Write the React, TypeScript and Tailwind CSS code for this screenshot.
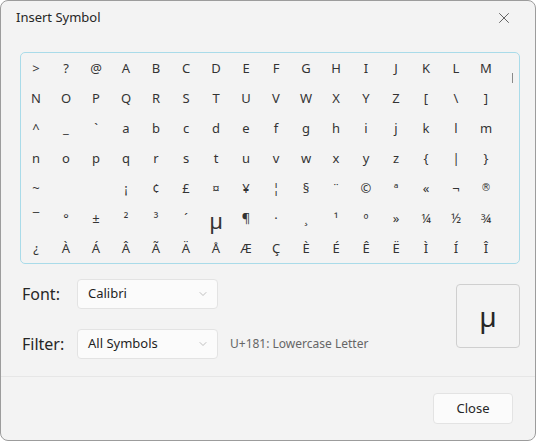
import { X, ChevronDown } from "lucide-react";

const rows: string[][] = [
    [">", "?", "@", "A", "B", "C", "D", "E", "F", "G", "H", "I", "J", "K", "L", "M"],
    ["N", "O", "P", "Q", "R", "S", "T", "U", "V", "W", "X", "Y", "Z", "[", "\\", "]"],
    ["^", "_", "`", "a", "b", "c", "d", "e", "f", "g", "h", "i", "j", "k", "l", "m"],
    ["n", "o", "p", "q", "r", "s", "t", "u", "v", "w", "x", "y", "z", "{", "|", "}"],
    ["~", "", "", "¡", "¢", "£", "¤", "¥", "¦", "§", "¨", "©", "ª", "«", "¬", "®"],
    ["¯", "°", "±", "²", "³", "´", "µ", "¶", "·", "¸", "¹", "º", "»", "¼", "½", "¾"],
    ["¿", "À", "Á", "Â", "Ã", "Ä", "Å", "Æ", "Ç", "È", "É", "Ê", "Ë", "Ì", "Í", "Î"],
];

function Select({ value }: { value: string }) {
    return (
        <div className="w-[141px] h-[30px] bg-[#fbfbfb] border border-[#e3e3e3] rounded-[4px] flex items-center justify-between pl-[10px] pr-[8px] text-[13px] text-[#1f1f1f]">
            <span>{value}</span>
            <ChevronDown size={12} strokeWidth={1.25} className="text-[#9a9a9a]" />
        </div>
    );
}

export default function App() {
    return (
        <div className="w-[536px] h-[441px] bg-[#f3f3f3] border border-[#9c9c9c] rounded-lg overflow-hidden flex flex-col font-['Noto_Sans',sans-serif] text-[#1f1f1f]">
            {/* title bar */}
            <div className="h-[34px] flex items-center justify-between pl-[15px] pr-[26px] shrink-0">
                <span className="text-[13px] text-[#262626]">Insert Symbol</span>
                <X size={18} strokeWidth={1} className="text-[#333] -mr-[4px]" />
            </div>

            <div className="flex-1 flex flex-col pl-[19px] pt-[17px] border-b border-[#e6e6e6]">
                {/* symbol grid */}
                <div className="relative w-[500px] h-[212px] border border-[#a9dbe9] rounded-[5px] pt-[1px]">
                    <div className="grid grid-cols-[repeat(16,30px)] grid-rows-[repeat(7,30px)]">
                        {rows.flat().map((ch, i) => (
                            <div
                                key={i}
                                className={`flex items-center justify-center text-[#333] ${ch === "µ" ? "text-[22px] pt-[2px]" : ch === "®" ? "text-[10px] font-['DejaVu_Sans',sans-serif] pb-[4px]" : "text-[13px]"}`}
                            >
                                {ch === "®" ? "\u00AE\uFE0E" : ch}
                            </div>
                        ))}
                    </div>
                    <div className="absolute right-[6px] top-[20px] w-[1px] h-[10px] bg-[#8a8a8a]" />
                </div>

                {/* font / filter */}
                <div className="flex mt-[15px]">
                    <div className="flex flex-col gap-[20px]">
                        <div className="flex items-center">
                            <span className="w-[57px] pl-[2px] text-[16px] text-[#262626]">Font:</span>
                            <Select value="Calibri" />
                        </div>
                        <div className="flex items-center">
                            <span className="w-[57px] pl-[2px] text-[16px] text-[#262626]">Filter:</span>
                            <Select value="All Symbols" />
                            <span className="ml-3 text-[12px] text-[#666]">U+181: Lowercase Letter</span>
                        </div>
                    </div>
                    <div className="ml-auto mr-[15px] mt-[5px] w-[64px] h-[64px] border border-[#cfcfcf] rounded-[4px] flex items-center justify-center text-[28px] text-[#262626]">
                        µ
                    </div>
                </div>
            </div>

            {/* footer */}
            <div className="h-[63px] shrink-0 flex items-center justify-end pr-[22px]">
                <button className="w-[80px] h-[31px] bg-[#fbfbfb] border border-[#e3e3e3] rounded-[4px] text-[13px] text-[#262626]">
                    Close
                </button>
            </div>
        </div>
    );
}
